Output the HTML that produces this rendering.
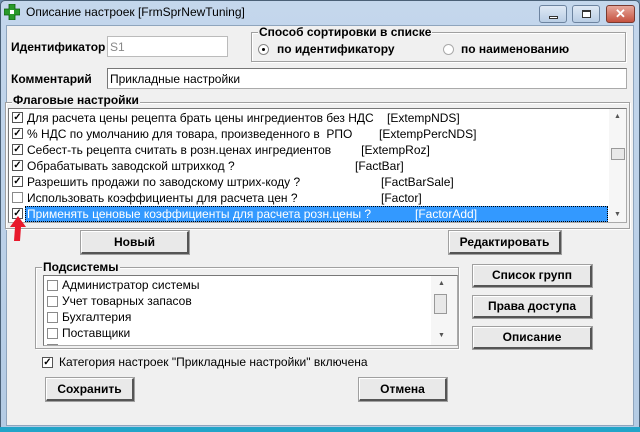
<!DOCTYPE html>
<html><head><meta charset="utf-8"><style>
*{box-sizing:border-box;margin:0;padding:0}
body{width:640px;height:432px;overflow:hidden;background:#6f8faf;font-family:"Liberation Sans",sans-serif;font-size:12px;color:#000;position:relative}
.a{position:absolute}
.win{left:0;top:0;width:640px;height:432px;background:linear-gradient(#c4d7ec,#b4cbe4);border:1px solid #4a6076;border-radius:5px 5px 0 0}
.body{left:6px;top:25px;width:628px;height:401px;background:#f0f0f0;border:1px solid #8fa5bd}
.bottom{left:0;top:427px;width:640px;height:5px;background:#23a4c8}
.b{font-weight:bold;font-size:12px;white-space:nowrap}
.t{white-space:nowrap}
.inp{background:#fff;border:1px solid #aaa;border-top-color:#777;border-left-color:#777}
.grp{border:1px solid #a0a0a0;box-shadow:inset 1px 1px 0 #fff,1px 1px 0 #fff}
.leg{background:#f0f0f0;padding:0 1px;font-weight:bold;line-height:12px}
.btn{background:#e9e9e9;border:1px solid #fff;border-right:2px solid #555;border-bottom:2px solid #555;outline:1px solid #a0a0a0;font-weight:bold;text-align:center;font-size:12px}
.cb{width:11px;height:11px;border:1px solid #555;background:#fff;font-size:10px;line-height:9px;text-align:center;font-weight:bold}
.cbu{width:11px;height:11px;border:1px solid #8a8a8a;background:#fff}
.row{height:16px;line-height:16px}
</style></head><body>
<div class="a win"></div>
<div class="a" style="left:4px;top:4px;width:16px;height:16px">
<svg width="16" height="16"><path d="M5 0h6v5h5v6h-5v5H5v-5H0V5h5z" fill="#2a9a2a" stroke="#0b5a0b" stroke-width=".8"/><path d="M6 6h4v4H6z" fill="#fff"/></svg></div>
<div class="a t" style="left:26px;top:5px;font-size:12px">Описание настроек [FrmSprNewTuning]</div>
<div class="a" style="left:539px;top:5px;width:28px;height:18px;border:1px solid #6d84a0;border-radius:3px;background:linear-gradient(#dfe9f5,#b9cde4)"><div class="a" style="left:9px;top:10px;width:9px;height:3px;background:#fff;border:1px solid #333"></div></div>
<div class="a" style="left:572px;top:5px;width:28px;height:18px;border:1px solid #6d84a0;border-radius:3px;background:linear-gradient(#dfe9f5,#b9cde4)"><div class="a" style="left:9px;top:4px;width:9px;height:8px;border:1px solid #333;border-top-width:2px;background:#fff"></div></div>
<div class="a" style="left:606px;top:5px;width:29px;height:18px;border:1px solid #7a3a30;border-radius:3px;background:linear-gradient(#e7a89c,#c5523f);color:#fff;font-weight:bold;text-align:center;line-height:16px;font-size:13px">✕</div>
<div class="a body"></div>
<div class="a bottom"></div>

<div class="a b" style="left:11px;top:40px">Идентификатор</div>
<div class="a inp" style="left:107px;top:36px;width:121px;height:21px;border-color:#bbb;color:#888;padding:3px 2px">S1</div>

<div class="a grp" style="left:251px;top:32px;width:375px;height:30px"></div>
<div class="a leg" style="left:258px;top:26px">Способ сортировки в списке</div>
<div class="a" style="left:258px;top:44px;width:11px;height:11px;border-radius:50%;border:1px solid #888;background:#fff"><div class="a" style="left:3px;top:3px;width:3px;height:3px;background:#000;border-radius:50%"></div></div>
<div class="a b" style="left:277px;top:42px">по идентификатору</div>
<div class="a" style="left:443px;top:44px;width:11px;height:11px;border-radius:50%;border:1px solid #aaa;background:#fff"></div>
<div class="a b" style="left:461px;top:42px">по наименованию</div>

<div class="a b" style="left:11px;top:72px">Комментарий</div>
<div class="a inp" style="left:107px;top:68px;width:520px;height:21px;padding:3px 2px">Прикладные настройки</div>

<div class="a grp" style="left:5px;top:102px;width:625px;height:127px"></div>
<div class="a leg" style="left:12px;top:94px">Флаговые настройки</div>
<div class="a inp" style="left:8px;top:108px;width:619px;height:115px"></div>
<div class="a" style="left:10px;top:110px;width:598px">
<div class="row" style="position:relative"><div class="a cb" style="left:2px;top:2px">✓</div><span class="a t" style="left:17px">Для расчета цены рецепта брать цены ингредиентов без НДС&nbsp;&nbsp;&nbsp;&nbsp;[ExtempNDS]</span></div>
<div class="row" style="position:relative"><div class="a cb" style="left:2px;top:2px">✓</div><span class="a t" style="left:17px">% НДС по умолчанию для товара, произведенного в&nbsp; РПО&nbsp;&nbsp;&nbsp;&nbsp;&nbsp;&nbsp;&nbsp;&nbsp;[ExtempPercNDS]</span></div>
<div class="row" style="position:relative"><div class="a cb" style="left:2px;top:2px">✓</div><span class="a t" style="left:17px">Себест-ть рецепта считать в розн.ценах ингредиентов&nbsp;&nbsp;&nbsp;&nbsp;&nbsp;&nbsp;&nbsp;&nbsp;&nbsp;[ExtempRoz]</span></div>
<div class="row" style="position:relative"><div class="a cb" style="left:2px;top:2px">✓</div><span class="a t" style="left:17px">Обрабатывать заводской штрихкод ?</span><span class="a t" style="left:345px">[FactBar]</span></div>
<div class="row" style="position:relative"><div class="a cb" style="left:2px;top:2px">✓</div><span class="a t" style="left:17px">Разрешить продажи по заводскому штрих-коду ?</span><span class="a t" style="left:371px">[FactBarSale]</span></div>
<div class="row" style="position:relative"><div class="a cbu" style="left:2px;top:2px"></div><span class="a t" style="left:17px">Использовать коэффициенты для расчета цен ?</span><span class="a t" style="left:371px">[Factor]</span></div>
<div class="row" style="position:relative"><div class="a cb" style="left:2px;top:2px">✓</div><div class="a" style="left:15px;top:0;width:583px;height:16px;background:#3399ff;outline:1px dotted #000;outline-offset:-1px"></div><span class="a t" style="left:17px;color:#fff">Применять ценовые коэффициенты для расчета розн.цены ?</span><span class="a t" style="left:275px;color:#fff;margin-left:0"><span style="position:relative;left:0">&nbsp;</span></span><span class="a t" style="left:405px;color:#fff">[FactorAdd]</span></div>
</div>
<div class="a" style="left:609px;top:109px;width:17px;height:113px;background:#f6f6f6"></div>
<div class="a" style="left:614px;top:113px;font-size:7px;color:#555">▲</div>
<div class="a" style="left:611px;top:148px;width:14px;height:12px;background:#e8e8e8;border:1px solid #999"></div>
<div class="a" style="left:614px;top:211px;font-size:7px;color:#555">▼</div>
<svg class="a" style="left:8px;top:216px" width="22" height="26"><path d="M10 0L2 11h5l-1 14h6l1-14h5z" fill="#e8192c"/></svg>

<div class="a btn" style="left:81px;top:231px;width:108px;height:23px;line-height:20px">Новый</div>
<div class="a btn" style="left:449px;top:231px;width:112px;height:23px;line-height:20px">Редактировать</div>

<div class="a grp" style="left:35px;top:267px;width:424px;height:82px"></div>
<div class="a leg" style="left:42px;top:261px">Подсистемы</div>
<div class="a inp" style="left:43px;top:275px;width:415px;height:71px;overflow:hidden">
<div class="a" style="left:1px;top:1px">
<div class="row" style="position:relative"><div class="a cbu" style="left:2px;top:3px"></div><span class="a t" style="left:17px">Администратор системы</span></div>
<div class="row" style="position:relative"><div class="a cbu" style="left:2px;top:3px"></div><span class="a t" style="left:17px">Учет товарных запасов</span></div>
<div class="row" style="position:relative"><div class="a cbu" style="left:2px;top:3px"></div><span class="a t" style="left:17px">Бухгалтерия</span></div>
<div class="row" style="position:relative"><div class="a cbu" style="left:2px;top:3px"></div><span class="a t" style="left:17px">Поставщики</span></div>
<div class="row" style="position:relative"><div class="a cbu" style="left:2px;top:3px"></div></div>
</div>
<div class="a" style="left:387px;top:0;width:27px;height:70px;background:#f6f6f6"></div>
<div class="a" style="left:394px;top:4px;font-size:7px;color:#555">▲</div>
<div class="a" style="left:390px;top:18px;width:13px;height:20px;background:#e8e8e8;border:1px solid #999"></div>
<div class="a" style="left:394px;top:56px;font-size:7px;color:#555">▼</div>
</div>

<div class="a btn" style="left:473px;top:265px;width:119px;height:22px;line-height:19px">Список групп</div>
<div class="a btn" style="left:473px;top:296px;width:119px;height:22px;line-height:19px">Права доступа</div>
<div class="a btn" style="left:473px;top:327px;width:119px;height:22px;line-height:19px">Описание</div>

<div class="a cb" style="left:42px;top:357px">✓</div>
<div class="a t" style="left:59px;top:355px">Категория настроек "Прикладные настройки" включена</div>

<div class="a btn" style="left:46px;top:378px;width:88px;height:23px;line-height:20px">Сохранить</div>
<div class="a btn" style="left:359px;top:378px;width:88px;height:23px;line-height:20px">Отмена</div>
</body></html>
